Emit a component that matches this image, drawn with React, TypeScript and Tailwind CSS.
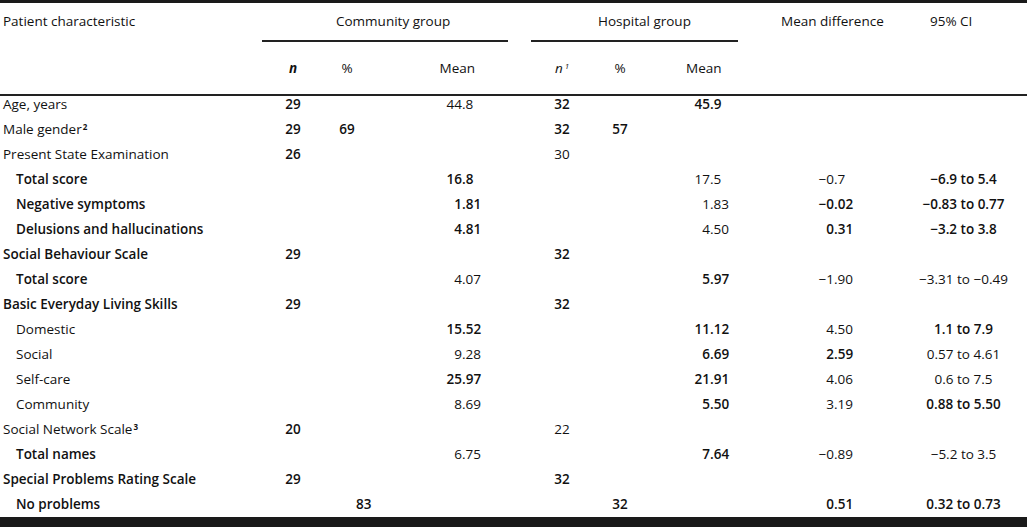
import React from "react";

type Key = "label" | "cn" | "cp" | "cm" | "hn" | "hp" | "hm" | "md" | "ci";

type Row = {
  label: string;
  sup?: string;
  sub?: boolean;
  cn?: string;
  cp?: string;
  cpShift?: boolean;
  cm?: string;
  hn?: string;
  hp?: string;
  hm?: string;
  md?: string;
  ci?: string;
  b?: Key[]; // cells that print heavier in the original
};

const rows: Row[] = [
  { label: "Age, years", cn: "29", cm: "44.8", hn: "32", hm: "45.9", b: ["cn", "hn", "hm"] },
  { label: "Male gender", sup: "2", cn: "29", cp: "69", hn: "32", hp: "57", b: ["cn", "cp", "hn", "hp"] },
  { label: "Present State Examination", cn: "26", hn: "30", b: ["cn"] },
  { label: "Total score", sub: true, cm: "16.8", hm: "17.5", md: "\u22120.7", ci: "\u22126.9 to 5.4", b: ["label", "cm", "ci"] },
  { label: "Negative symptoms", sub: true, cm: "1.81", hm: "1.83", md: "\u22120.02", ci: "\u22120.83 to 0.77", b: ["label", "cm", "md", "ci"] },
  { label: "Delusions and hallucinations", sub: true, cm: "4.81", hm: "4.50", md: "0.31", ci: "\u22123.2 to 3.8", b: ["label", "cm", "md", "ci"] },
  { label: "Social Behaviour Scale", cn: "29", hn: "32", b: ["label", "cn", "hn"] },
  { label: "Total score", sub: true, cm: "4.07", hm: "5.97", md: "\u22121.90", ci: "\u22123.31 to \u22120.49", b: ["label", "hm"] },
  { label: "Basic Everyday Living Skills", cn: "29", hn: "32", b: ["label", "cn", "hn"] },
  { label: "Domestic", sub: true, cm: "15.52", hm: "11.12", md: "4.50", ci: "1.1 to 7.9", b: ["cm", "hm", "ci"] },
  { label: "Social", sub: true, cm: "9.28", hm: "6.69", md: "2.59", ci: "0.57 to 4.61", b: ["hm", "md"] },
  { label: "Self-care", sub: true, cm: "25.97", hm: "21.91", md: "4.06", ci: "0.6 to 7.5", b: ["cm", "hm"] },
  { label: "Community", sub: true, cm: "8.69", hm: "5.50", md: "3.19", ci: "0.88 to 5.50", b: ["hm", "ci"] },
  { label: "Social Network Scale", sup: "3", cn: "20", hn: "22", b: ["cn"] },
  { label: "Total names", sub: true, cm: "6.75", hm: "7.64", md: "\u22120.89", ci: "\u22125.2 to 3.5", b: ["label", "hm"] },
  { label: "Special Problems Rating Scale", cn: "29", hn: "32", b: ["label", "cn", "hn"] },
  { label: "No problems", sub: true, cp: "83", cpShift: true, hp: "32", md: "0.51", ci: "0.32 to 0.73", b: ["label", "cp", "hp", "md", "ci"] },
];

// decimal aligned number: integer part is right-aligned into a fixed box
function Dec({ value, intW }: { value?: string; intW: string }) {
  if (!value) return null;
  const i = value.indexOf(".");
  const whole = i >= 0 ? value.slice(0, i) : value;
  const frac = i >= 0 ? value.slice(i) : "";
  return (
    <span className="flex">
      <span className={`inline-block shrink-0 text-right ${intW}`}>{whole}</span>
      <span>{frac}</span>
    </span>
  );
}

export default function App() {
  return (
    <div
      className="w-[1027px] h-[527px] bg-white text-[#111] text-[13.5px] leading-4 overflow-hidden"
      style={{ fontFamily: "'Open Sans', 'Liberation Sans', sans-serif" }}
    >
      <div className="h-[3px] bg-[#1a1a1a]" />

      {/* header row 1 */}
      <div className="flex h-[39px]">
        <div className="w-[262px] pl-[3px] pt-[10px]">Patient characteristic</div>
        <div className="w-[246px] border-b-2 border-[#222] pl-[74px] pt-[10px]">Community group</div>
        <div className="w-[23px]" />
        <div className="w-[207px] border-b-2 border-[#222] pl-[67px] pt-[10px]">Hospital group</div>
        <div className="w-[22px]" />
        <div className="w-[140px] pl-[21px] pt-[10px]">Mean difference</div>
        <div className="w-[127px] pl-[30px] pt-[10px]">95% CI</div>
      </div>

      {/* header row 2 */}
      <div className="flex h-[54px] border-b-2 border-[#222]">
        <div className="w-[262px]" />
        <div className="w-[62px] pt-[18px] text-center font-bold italic">n</div>
        <div className="w-[46px] pt-[18px] text-center">%</div>
        <div className="w-[161px] pt-[18px] text-right pr-[56px]">Mean</div>
        <div className="w-[62px] pt-[18px] text-center italic">
          n<sup className="text-[8px] ml-[2px]">1</sup>
        </div>
        <div className="w-[54px] pt-[18px] text-center">%</div>
        <div className="w-[113px] pt-[18px] pl-[39px]">Mean</div>
      </div>

      {/* body */}
      {rows.map((r, idx) => {
        const w = (k: Key) => (r.b?.includes(k) ? "font-semibold" : "");
        return (
          <div
            key={idx}
            className={`flex ${idx === rows.length - 1 ? "h-[21px]" : "h-[25px]"}`}
          >
            <div className={`w-[262px] ${r.sub ? "pl-[16px]" : "pl-[3px]"} ${w("label")}`}>
              {r.label}
              {r.sup && <sup className="text-[8px] font-bold ml-px">{r.sup}</sup>}
            </div>
            <div className={`w-[62px] text-center ${w("cn")}`}>{r.cn}</div>
            <div className={`w-[46px] ${r.cpShift ? "pl-[32px]" : "text-center"} ${w("cp")}`}>{r.cp}</div>
            <div className={`w-[161px] ${w("cm")}`}>
              <Dec value={r.cm} intW="w-[92px]" />
            </div>
            <div className={`w-[62px] text-center ${w("hn")}`}>{r.hn}</div>
            <div className={`w-[54px] text-center ${w("hp")}`}>{r.hp}</div>
            <div className={`w-[113px] ${w("hm")}`}>
              <Dec value={r.hm} intW="w-[63px]" />
            </div>
            <div className={`w-[140px] ${w("md")}`}>
              <Dec value={r.md} intW="w-[74px]" />
            </div>
            <div className={`w-[127px] text-center ${w("ci")}`}>{r.ci}</div>
          </div>
        );
      })}

      <div className="h-[10px] bg-[#1a1a1a]" />
    </div>
  );
}
